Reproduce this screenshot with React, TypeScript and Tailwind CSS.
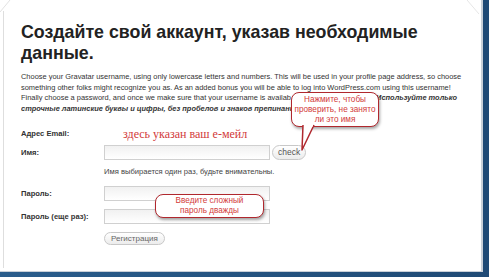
import React from "react";

export default function App() {
  const label = "w-[83px] shrink-0 text-[7.6px] font-bold text-[#333]";
  const input = "w-[166px] h-[15px] border border-[#d0d0d0] bg-gradient-to-b from-[#f1f1f1] to-white";
  return (
    <div className="relative w-[489px] h-[277px] overflow-hidden bg-gradient-to-r from-[#2a5d8c] to-[#1f4a75]" style={{ fontFamily: '"Liberation Sans", Arial, sans-serif' }}>
      <div className="absolute left-0 top-0 w-[483px] h-[272px] bg-white border-r-[2px] border-b-[1px] border-[#c9d0d8]">
        <div className="absolute left-[3px] top-[11px] bottom-[3px] w-px bg-[#dedede]" />
        <svg className="absolute left-0 top-0" width="14" height="14" viewBox="0 0 14 14">
          <path d="M0 12 L10 0" stroke="#e2e2e2" strokeWidth="1" fill="none" />
        </svg>
        <svg className="absolute right-0 top-0" width="14" height="14" viewBox="0 0 14 14">
          <path d="M0 0 L12 14" stroke="#e6e6e6" strokeWidth="1" fill="none" />
        </svg>
      </div>
      <div className="relative w-[483px] h-[272px] pl-[21px] pt-[22px]">
        <h1 className="text-[17.8px] leading-[21px] font-bold text-[#222] w-[440px]">
          Создайте свой аккаунт, указав необходимые данные.
        </h1>
        <div className="mt-[8px] text-[7.45px] leading-[10.5px] text-[#333] whitespace-nowrap">
          <div>Choose your Gravatar username, using only lowercase letters and numbers. This will be used in your profile page address, so choose</div>
          <div>something other folks might recognize you as. As an added bonus you will be able to log into WordPress.com using this username!</div>
          <div className="flex w-[436px]">
            <div className="w-[270px] overflow-hidden">Finally choose a password, and once we make sure that your username is available, we'll go.</div>
            <b className="ml-auto"><i>Используйте только</i></b>
          </div>
          <div className="w-[270px] overflow-hidden"><b><i>строчные латинские буквы и цифры, без пробелов и знаков препинания.</i></b></div>
        </div>
        <div className="mt-[13px] flex items-center h-[14px]">
          <span className={label}>Адрес Email:</span>
          <span className="ml-[19px] text-[12px] leading-[14px] text-[#d23a3a]" style={{ fontFamily: '"Liberation Serif", serif' }}>здесь указан ваш е-мейл</span>
        </div>
        <div className="mt-[4px] flex items-center h-[15px]">
          <span className={label}>Имя:</span>
          <div className={input} />
          <div className="ml-[2px] h-[15px] px-[5px] flex items-center rounded-full border border-[#c8c8c8] bg-gradient-to-b from-white to-[#ececec] text-[8.5px] text-[#555]">check</div>
        </div>
        <div className="mt-[7px] h-[10px] leading-[10px] pl-[83px] text-[7.6px] text-[#444]">Имя выбирается один раз, будьте внимательны.</div>
        <div className="mt-[9px] flex items-center h-[15px]">
          <span className={label}>Пароль:</span>
          <div className={input} />
        </div>
        <div className="mt-[8px] flex items-center h-[15px]">
          <span className={label}>Пароль (еще раз):</span>
          <div className={input} />
        </div>
        <div className="mt-[8px] pl-[83px] flex">
          <div className="flex h-[13px] px-[6px] items-center rounded-full border border-[#c8c8c8] bg-gradient-to-b from-white to-[#ececec] text-[8px] text-[#666]">Регистрация</div>
        </div>
      </div>

      {/* callout 1 */}
      <div className="absolute left-[291px] top-[92px] w-[88px] h-[35px] rounded-[8px] border-[1.5px] border-[#b0282e] bg-white shadow-[1px_2px_3px_rgba(0,0,0,0.35)] flex flex-col items-center justify-center text-[8.2px] leading-[10px] text-[#d23a3a]">
        <span>Нажмите, чтобы</span>
        <span>проверить, не занято</span>
        <span>ли это имя</span>
      </div>
      <svg className="absolute left-[298px] top-[124px]" width="20" height="30" viewBox="0 0 20 30">
        <path d="M5 1 L4 26 L16 1" fill="white" stroke="#b0282e" strokeWidth="1.5" strokeLinejoin="round" />
        <rect x="6" y="0" width="9" height="2.5" fill="white" />
      </svg>

      {/* callout 2 */}
      <div className="absolute left-[155px] top-[194px] w-[109px] h-[24px] rounded-[8px] border-[1.5px] border-[#b0282e] bg-white shadow-[1px_2px_3px_rgba(0,0,0,0.35)] flex flex-col items-center justify-center text-[8.2px] leading-[10px] text-[#d23a3a]">
        <span>Введите сложный</span>
        <span>пароль дважды</span>
      </div>
    </div>
  );
}
